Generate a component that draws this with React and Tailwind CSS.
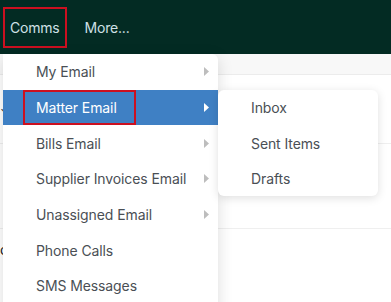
const ITEMS = [
  { label: "My Email", sub: true },
  { label: "Matter Email", sub: true, active: true },
  { label: "Bills Email", sub: true },
  { label: "Supplier Invoices Email", sub: true },
  { label: "Unassigned Email", sub: true },
  { label: "Phone Calls" },
  { label: "SMS Messages" },
];

const SUB = ["Inbox", "Sent Items", "Drafts"];

function Caret({ white }) {
  return (
    <svg width="5" height="9" viewBox="0 0 5 9" className="shrink-0">
      <path d="M0 0 L5 4.5 L0 9 Z" fill={white ? "#ffffff" : "#bdbdbd"} />
    </svg>
  );
}

export default function App() {
  return (
    <div
      className="relative w-[391px] h-[302px] overflow-hidden bg-white"
      style={{ fontFamily: "Inter, 'Noto Sans', sans-serif" }}
    >
      {/* top nav */}
      <div className="h-[54px] bg-[#032b23] flex items-center pl-[3px] gap-[18px] text-[14px] text-[#cfe0e6]">
        <div className="h-[41px] px-[5px] flex items-center border-2 border-[#cc1020] tracking-[-0.2px]">Comms</div>
        <div className="tracking-[-0.2px]">More...</div>
      </div>

      {/* page behind */}
      <div className="h-[21px] bg-[#f8f8f8] border-b border-[#ececec]" />
      <div className="h-[69px] border-b border-[#efefef] flex items-center text-[12px] text-[#333]">
        <span>⌄</span>
      </div>
      <div className="h-[85px] border-b border-[#efefef]" />
      <div className="flex items-center h-[40px] text-[14px] text-[#222]">
        <span>c</span>
      </div>

      {/* main dropdown */}
      <div className="absolute left-[3px] top-[54px] w-[215px] h-[260px] bg-white rounded-tr-[6px] shadow-[0_4px_16px_rgba(0,0,0,0.14)] text-[14px] text-[#4a4f55] tracking-[-0.1px]">
        {ITEMS.map((it) => (
          <div
            key={it.label}
            className={
              "h-[35.7px] flex items-center justify-between pl-[33px] pr-[9px] " +
              (it.active ? "bg-[#3f80c4] text-white" : "")
            }
          >
            {it.active ? (
              <span className="h-[35px] -ml-[13px] pl-[11px] pr-[17px] flex items-center border-2 border-[#cc1020]">
                {it.label}
              </span>
            ) : (
              <span>{it.label}</span>
            )}
            {it.sub && <Caret white={it.active} />}
          </div>
        ))}
      </div>

      {/* submenu */}
      <div className="absolute left-[218px] top-[90px] w-[160px] h-[106px] bg-white rounded-[6px] shadow-[0_2px_10px_rgba(0,0,0,0.13)] text-[14px] text-[#4a4f55] tracking-[-0.1px]">
        {SUB.map((s) => (
          <div key={s} className="h-[35.5px] flex items-center pl-[33px]">
            {s}
          </div>
        ))}
      </div>
    </div>
  );
}
